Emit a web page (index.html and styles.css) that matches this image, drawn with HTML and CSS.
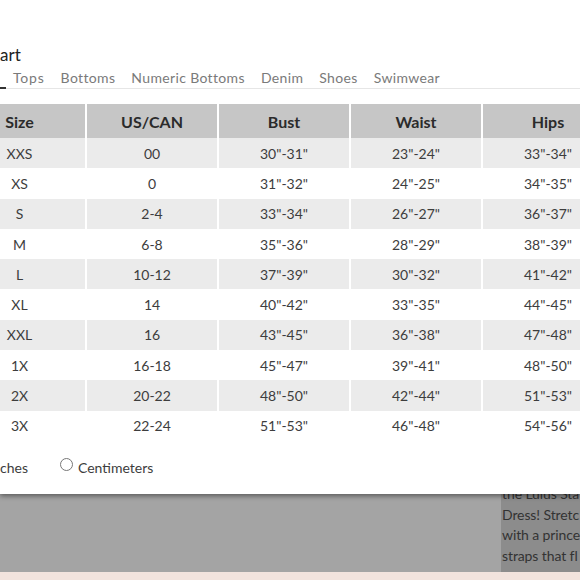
FILE: index.html
```html
<!DOCTYPE html>
<html>
<head>
<meta charset="utf-8">
<link rel="stylesheet" href="styles.css">
</head>
<body>
<div class="page">
  <div class="page-main"></div>
  <div class="page-side">
    <div class="desc">
      <div class="line">the Lulus Sta</div>
      <div class="line">Dress! Stretc</div>
      <div class="line">with a prince</div>
      <div class="line">straps that fl</div>
    </div>
  </div>
</div>
<div class="page-strip"></div>

<div class="modal">
  <div class="title">art</div>
  <div class="tabs">
    <span class="tab active"></span>
    <span class="tab">Tops</span>
    <span class="tab">Bottoms</span>
    <span class="tab">Numeric Bottoms</span>
    <span class="tab">Denim</span>
    <span class="tab">Shoes</span>
    <span class="tab">Swimwear</span>
    <span class="tab-rest"></span>
  </div>
  <table class="chart">
    <thead>
      <tr><th>Size</th><th>US/CAN</th><th>Bust</th><th>Waist</th><th>Hips</th></tr>
    </thead>
    <tbody>
      <tr><td>XXS</td><td>00</td><td>30"-31"</td><td>23"-24"</td><td>33"-34"</td></tr>
      <tr><td>XS</td><td>0</td><td>31"-32"</td><td>24"-25"</td><td>34"-35"</td></tr>
      <tr><td>S</td><td>2-4</td><td>33"-34"</td><td>26"-27"</td><td>36"-37"</td></tr>
      <tr><td>M</td><td>6-8</td><td>35"-36"</td><td>28"-29"</td><td>38"-39"</td></tr>
      <tr><td>L</td><td>10-12</td><td>37"-39"</td><td>30"-32"</td><td>41"-42"</td></tr>
      <tr><td>XL</td><td>14</td><td>40"-42"</td><td>33"-35"</td><td>44"-45"</td></tr>
      <tr><td>XXL</td><td>16</td><td>43"-45"</td><td>36"-38"</td><td>47"-48"</td></tr>
      <tr><td>1X</td><td>16-18</td><td>45"-47"</td><td>39"-41"</td><td>48"-50"</td></tr>
      <tr><td>2X</td><td>20-22</td><td>48"-50"</td><td>42"-44"</td><td>51"-53"</td></tr>
      <tr><td>3X</td><td>22-24</td><td>51"-53"</td><td>46"-48"</td><td>54"-56"</td></tr>
    </tbody>
  </table>
  <div class="units">
    <span class="unit-label">ches</span>
    <label class="unit"><span class="radio"></span>Centimeters</label>
  </div>
</div>
</body>
</html>
```

FILE: styles.css
```css
html, body {
  margin: 0;
  padding: 0;
}
body {
  width: 580px;
  height: 580px;
  overflow: hidden;
  position: relative;
  font-family: "Lato", "Liberation Sans", sans-serif;
  background: #f2e3dd;
}
.page {
  display: flex;
  height: 572px;
}
.page-main {
  width: 501px;
  background: #a4a4a4;
}
.page-side {
  flex: 1;
  background: #8c8c8c;
  overflow: hidden;
}
.desc {
  margin: 484px 0 0 1px;
  font-size: 14px;
  line-height: 20.7px;
  letter-spacing: -0.1px;
  color: #333;
}
.line {
  white-space: nowrap;
}
.page-strip {
  height: 8px;
  background: #f2e3dd;
}

.modal {
  position: absolute;
  top: 0;
  left: 0;
  width: 580px;
  height: 494px;
  background: #fff;
  overflow: hidden;
  box-shadow: 0 2px 5px rgba(0, 0, 0, 0.45);
}
.title {
  margin-top: 45px;
  height: 20px;
  font-size: 17px;
  line-height: 20px;
  color: #222;
}
.tabs {
  display: flex;
  align-items: flex-end;
  margin-top: 2px;
  height: 22px;
}
.tab {
  font-size: 14px;
  letter-spacing: 0.35px;
  color: #7a7a7a;
  line-height: 20px;
  padding: 0 8px;
  border-bottom: 1px solid #e6e6e6;
}
.tab:nth-child(2) {
  padding-left: 7px;
  letter-spacing: 0.8px;
}
.tab.active {
  width: 6px;
  padding: 0;
  height: 19px;
  border-bottom: 2px solid #333;
}
.tab-rest {
  flex: 1;
  border-bottom: 1px solid #e6e6e6;
}
.chart {
  margin: 15px 0 0 -46px;
  border-collapse: separate;
  border-spacing: 0;
  table-layout: fixed;
  width: 660px;
}
.chart th, .chart td {
  box-sizing: border-box;
  width: 132px;
  padding: 0;
  text-align: center;
  border-right: 2px solid #fff;
}
.chart th:first-child, .chart td:first-child {
  width: 133px;
}
.chart th {
  height: 34px;
  background: #c6c6c6;
  font-size: 16px;
  font-weight: 700;
  color: #2b2b2b;
}
.chart td {
  height: 30.3px;
  font-size: 14px;
  color: #3d3d3d;
}
.chart tbody tr:nth-child(odd) td {
  background: #ebebeb;
}
.units {
  display: flex;
  align-items: center;
  margin-top: 18px;
  font-size: 14px;
  color: #3d3d3d;
}
.unit-label {
  width: 60px;
}
.unit {
  display: flex;
  align-items: center;
}
.radio {
  width: 11px;
  height: 11px;
  border: 1px solid #777;
  border-radius: 50%;
  margin: -6px 5px 0 0;
}
```
